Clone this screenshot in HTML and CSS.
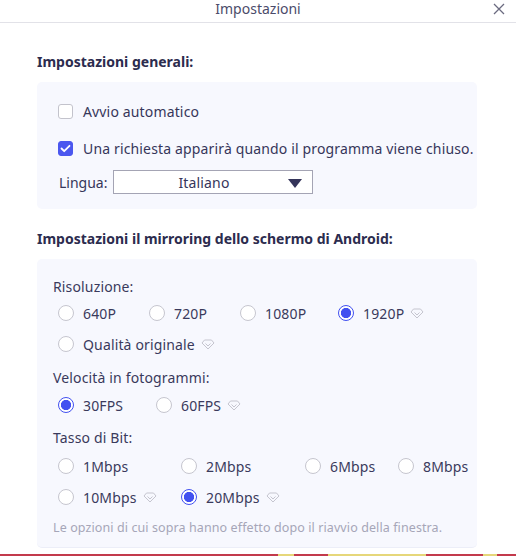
FILE: index.html
```html
<!DOCTYPE html>
<html lang="it">
<head>
<meta charset="utf-8">
<title>Impostazioni</title>
<link rel="stylesheet" href="styles.css">
</head>
<body>
<div class="window">
  <header class="titlebar">
    <span class="title">Impostazioni</span>
    <svg class="close" width="12" height="12" viewBox="0 0 12 12"><path d="M1 1L11 11M11 1L1 11" stroke="#6b6b80" stroke-width="1.3" fill="none"/></svg>
  </header>
  <main class="content">
    <h2 class="heading">Impostazioni generali:</h2>
    <section class="panel panel-general">
      <label class="check-row row-auto"><span class="checkbox"></span><span>Avvio automatico</span></label>
      <label class="check-row row-prompt"><span class="checkbox checked"><svg width="11" height="9" viewBox="0 0 11 9"><path d="M1.5 4.5L4.2 7.2L9.5 1.8" stroke="#fff" stroke-width="1.8" fill="none" stroke-linecap="round" stroke-linejoin="round"/></svg></span><span>Una richiesta apparirà quando il programma viene chiuso.</span></label>
      <div class="lang-row">
        <span class="lang-label">Lingua:</span>
        <div class="select"><span class="select-text">Italiano</span><span class="arrow"></span></div>
      </div>
    </section>

    <h2 class="heading heading-mirror">Impostazioni il mirroring dello schermo di Android:</h2>
    <section class="panel panel-mirror">
      <div class="group-label label-res">Risoluzione:</div>
      <div class="radio-grid grid-res">
        <span class="radio-item"><span class="radio"></span>640P</span>
        <span class="radio-item"><span class="radio"></span>720P</span>
        <span class="radio-item"><span class="radio"></span>1080P</span>
        <span class="radio-item"><span class="radio on"></span>1920P<svg class="gem" viewBox="0 0 14 11" width="14" height="11"><path d="M3.5 1H10.5L13 4L7 10L1 4Z M4.5 4.5L7 7L9.5 4.5" stroke="#c5c5cf" stroke-width="1" fill="none" stroke-linejoin="round"/></svg></span>
        <span class="radio-item span-all"><span class="radio"></span>Qualità originale<svg class="gem" viewBox="0 0 14 11" width="14" height="11"><path d="M3.5 1H10.5L13 4L7 10L1 4Z M4.5 4.5L7 7L9.5 4.5" stroke="#c5c5cf" stroke-width="1" fill="none" stroke-linejoin="round"/></svg></span>
      </div>
      <div class="group-label label-fps">Velocità in fotogrammi:</div>
      <div class="radio-grid grid-fps">
        <span class="radio-item"><span class="radio on"></span>30FPS</span>
        <span class="radio-item"><span class="radio"></span>60FPS<svg class="gem" viewBox="0 0 14 11" width="14" height="11"><path d="M3.5 1H10.5L13 4L7 10L1 4Z M4.5 4.5L7 7L9.5 4.5" stroke="#c5c5cf" stroke-width="1" fill="none" stroke-linejoin="round"/></svg></span>
      </div>
      <div class="group-label label-bit">Tasso di Bit:</div>
      <div class="radio-grid grid-bit">
        <span class="radio-item"><span class="radio"></span>1Mbps</span>
        <span class="radio-item"><span class="radio"></span>2Mbps</span>
        <span class="radio-item"><span class="radio"></span>6Mbps</span>
        <span class="radio-item"><span class="radio"></span>8Mbps</span>
        <span class="radio-item"><span class="radio"></span>10Mbps<svg class="gem" viewBox="0 0 14 11" width="14" height="11"><path d="M3.5 1H10.5L13 4L7 10L1 4Z M4.5 4.5L7 7L9.5 4.5" stroke="#c5c5cf" stroke-width="1" fill="none" stroke-linejoin="round"/></svg></span>
        <span class="radio-item"><span class="radio on"></span>20Mbps<svg class="gem" viewBox="0 0 14 11" width="14" height="11"><path d="M3.5 1H10.5L13 4L7 10L1 4Z M4.5 4.5L7 7L9.5 4.5" stroke="#c5c5cf" stroke-width="1" fill="none" stroke-linejoin="round"/></svg></span>
      </div>
      <p class="note">Le opzioni di cui sopra hanno effetto dopo il riavvio della finestra.</p>
    </section>
  </main>
  <div class="strip">
    <span class="seg red s1"></span><span class="seg yellow s2"></span><span class="seg red s3"></span><span class="seg yellow s4"></span><span class="seg red s5"></span><span class="seg yellow s6"></span><span class="seg red s7"></span>
  </div>
</div>
</body>
</html>
```
FILE: styles.css
```css
* { box-sizing: border-box; }
html, body { margin: 0; padding: 0; background: #fff; }
body {
  font-family: "Noto Sans", "Open Sans", sans-serif;
  font-size: 14px;
  letter-spacing: 0.15px;
  color: #36365a;
  width: 516px;
  height: 556px;
  overflow: hidden;
}
.window { display: flex; flex-direction: column; height: 556px; }
.titlebar {
  position: relative;
  height: 23px;
  border-bottom: 1px solid #e2e2e8;
  display: flex;
  justify-content: center;
  align-items: flex-start;
}
.title { line-height: 18px; font-size: 14px; color: #4b4b6a; letter-spacing: 0; }
.close { position: absolute; right: 11px; top: 3px; }
.content { padding: 29px 39px 0 37px; flex: 1; }
.heading {
  margin: 0 0 10px 0;
  font-size: 14px;
  line-height: 20px;
  font-weight: 700;
  letter-spacing: 0;
  color: #2c2c4e;
}
.heading-mirror { margin-top: 20px; }
.panel { background: #f7f8fe; border-radius: 5px; }
.panel-general { padding: 19px 0 15px 21px; display: flex; flex-direction: column; }
.check-row { display: flex; align-items: center; height: 20px; gap: 10px; }
.row-prompt { margin-top: 17px; }
.checkbox {
  width: 15px; height: 15px;
  border: 1px solid #c3c3cc;
  border-radius: 3px;
  background: #fff;
  display: flex; align-items: center; justify-content: center;
  flex: none;
}
.checkbox.checked { background: #4b57ef; border-color: #4b57ef; }
.lang-row { margin-top: 12px; display: flex; align-items: center; height: 24px; padding-left: 1px; }
.lang-label { width: 54px; letter-spacing: 0; }
.select {
  width: 200px; height: 24px;
  background: #fff;
  border: 1px solid #a4a4b4;
  display: flex; align-items: center;
  padding-right: 18px;
  position: relative;
}
.select-text { flex: 1; text-align: center; color: #36365a; }
.arrow {
  position: absolute; right: 10px; top: 8px;
  width: 0; height: 0;
  border-left: 7px solid transparent;
  border-right: 7px solid transparent;
  border-top: 9px solid #34345a;
}
.panel-mirror { padding: 18px 0 10px 16px; border-bottom: 1px solid #eceef8; }
.group-label { line-height: 20px; color: #3a3a5c; }
.radio-grid { display: grid; row-gap: 11px; padding-left: 5px; }
.grid-res { grid-template-columns: 91px 91px 98px auto; margin-top: 6px; }
.grid-fps { grid-template-columns: 98px auto; margin-top: 7px; }
.grid-bit { grid-template-columns: 123px 124px 93px auto; margin-top: 8px; }
.label-fps { margin-top: 14px; }
.label-bit { margin-top: 13px; }
.span-all { grid-column: 1 / -1; }
.radio-item { display: flex; align-items: center; height: 20px; white-space: nowrap; color: #3a3a5c; }
.radio {
  width: 16px; height: 16px; flex: none;
  border: 1px solid #c6c6cf;
  border-radius: 50%;
  background: #fff;
  margin-right: 9px;
}
.radio.on {
  border: 1.5px solid #4150f0;
  background: radial-gradient(circle, #4150f0 0 4.8px, #fff 5.4px);
}
.gem { margin-left: 6px; margin-top: 1px; }
.note {
  margin: 12px 0 0 0;
  font-size: 12.5px;
  letter-spacing: 0.1px;
  line-height: 18px;
  color: #a6a6b8;
}
.strip { display: flex; height: 2px; margin-top: auto; }
.seg { height: 2px; }
.red { background: #c33a4c; }
.yellow { background: #e6d77a; }
.s1 { width: 278px; } .s2 { width: 16px; } .s3 { width: 34px; } .s4 { width: 98px; } .s5 { width: 57px; } .s6 { width: 14px; } .s7 { flex: 1; }
```
